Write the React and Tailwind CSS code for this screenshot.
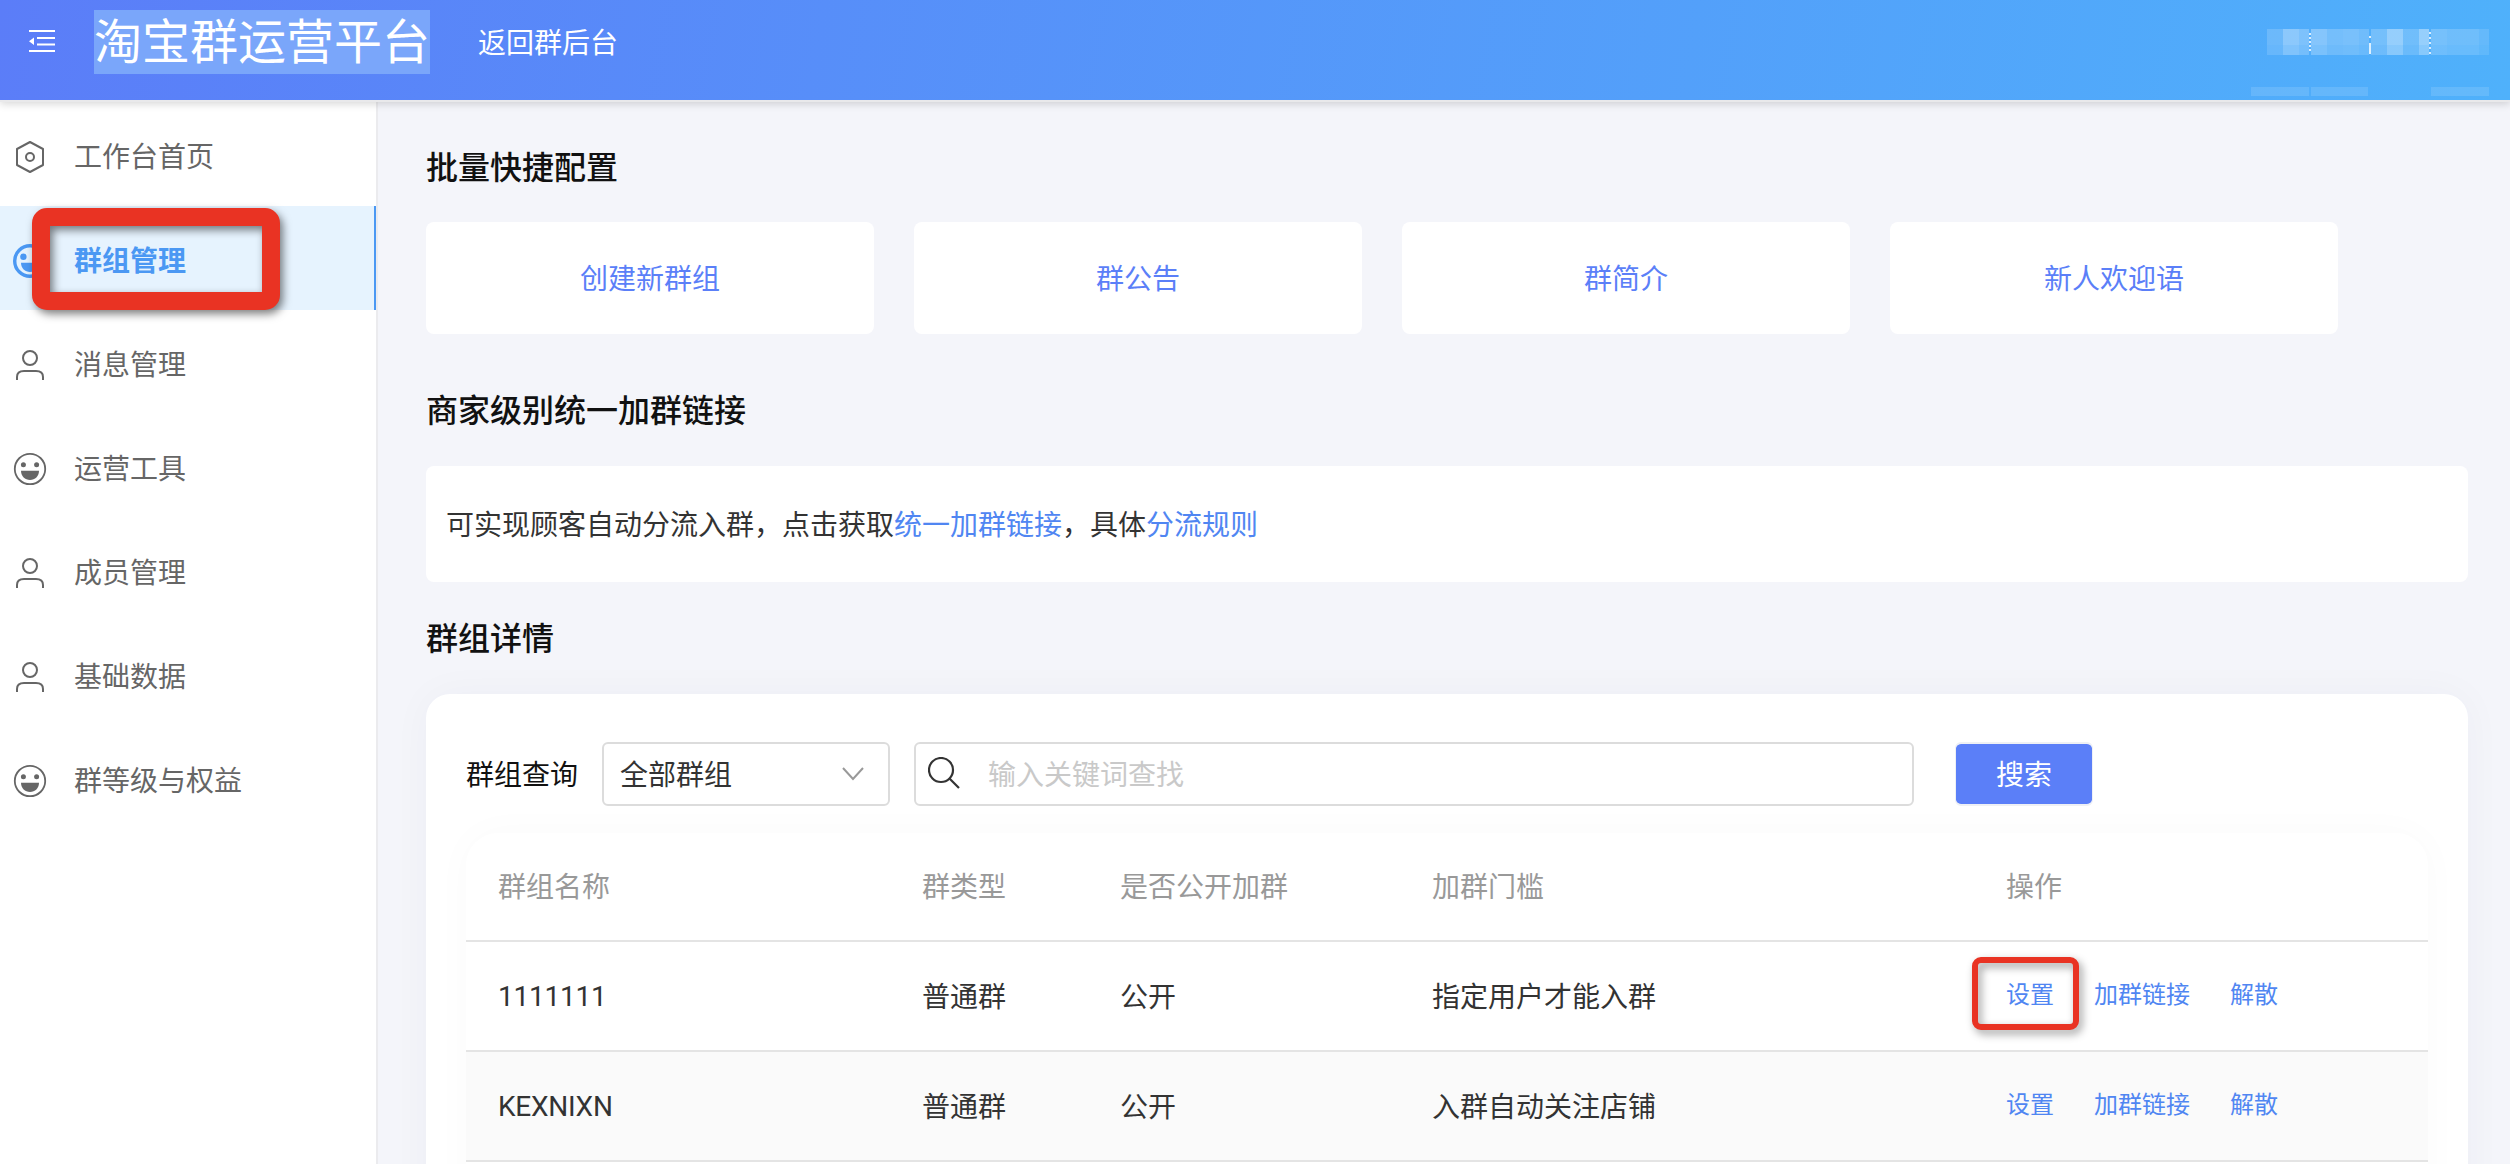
const HexagonIcon = () => (
    <svg width="32" height="34" viewBox="0 0 32 34" fill="none" stroke="currentColor" strokeWidth="2">
        <path d="M16 2 L29 9 V25 L16 32 L3 25 V9 Z" strokeLinejoin="round" />
        <circle cx="16" cy="17" r="4" />
    </svg>
);

const UserIcon = () => (
    <svg width="32" height="32" viewBox="0 0 32 32" fill="none" stroke="currentColor" strokeWidth="2">
        <circle cx="16" cy="9" r="7" />
        <path d="M3 31 V28 C3 24 6 22 10 22 H22 C26 22 29 24 29 28 V31" />
    </svg>
);

const SmileIcon = ({ bold }) => (
    <svg width="34" height="34" viewBox="0 0 34 34" fill="currentColor" className="-ml-px">
        <circle cx="17" cy="17" r={bold ? 15.3 : 15.2} fill="none" stroke="currentColor" strokeWidth={bold ? 3.4 : 1.8} />
        <circle cx="10.4" cy="12.8" r={bold ? 3.2 : 2.5} />
        <circle cx="23.6" cy="12.8" r={bold ? 3.2 : 2.5} />
        <path d="M8 18.7 H26 C26 24 22 28 17 28 C12 28 8 24 8 18.7 Z" />
    </svg>
);

const menus = [
    { label: "工作台首页", icon: HexagonIcon },
    { label: "群组管理", icon: SmileIcon, active: true },
    { label: "消息管理", icon: UserIcon },
    { label: "运营工具", icon: SmileIcon },
    { label: "成员管理", icon: UserIcon },
    { label: "基础数据", icon: UserIcon },
    { label: "群等级与权益", icon: SmileIcon },
];

const quickActions = ["创建新群组", "群公告", "群简介", "新人欢迎语"];

const groups = [
    { name: "1111111", type: "普通群", open: "公开", limit: "指定用户才能入群", marked: true },
    { name: "KEXNIXN", type: "普通群", open: "公开", limit: "入群自动关注店铺" },
];

// width and opacity of every masked cell of the account name
const maskGroups = [
    [[16, 0.16], [16, 0.34], [10, 0.26]],
    [[16, 0.3], [16, 0.21], [16, 0.23], [10, 0.18]],
    [[16, 0.21], [16, 0.4], [16, 0.19], [10, 0.4]],
    [[16, 0.22], [16, 0.18], [16, 0.18], [10, 0.12]],
];

const MaskedAccount = () => (
    <div className="relative w-[238px] h-[100px] pt-[29px]">
        <div className="flex gap-[2px] pl-[16px]">
            {maskGroups.map((cells, i) => (
                <div key={i} className="flex">
                    {cells.map(([width, opacity], j) => (
                        <div key={j} style={{ width, opacity }}>
                            <div className="h-4 bg-white" />
                            <div className="h-[10px] bg-white/80" />
                        </div>
                    ))}
                </div>
            ))}
        </div>
        <div className="absolute left-[58px] top-[33px] h-[20px] w-[2px] bg-[repeating-linear-gradient(to_bottom,#d8ecff_0_2px,transparent_2px_4px)]" />
        <div className="absolute left-[118px] top-[36px] h-[2px] w-[2px] bg-white/80" />
        <div className="absolute left-[118px] top-[43px] h-[11px] w-[2px] bg-white/80" />
        <div className="absolute left-[178px] top-[32px] h-[25px] w-[2px] bg-[repeating-linear-gradient(to_bottom,#d8ecff_0_2px,transparent_2px_5px)]" />
        <div className="flex gap-[2px] mt-8">
            <div className="w-[58px] h-[9px] bg-white/12" />
            <div className="w-[58px] h-[9px] bg-white/12" />
            <div className="w-[60px] h-[9px]" />
            <div className="w-[58px] h-[9px] bg-white/12" />
        </div>
    </div>
);

const Header = () => (
    <header className="relative z-10 h-[102px] shrink-0 border-b-2 border-[#e9e9eb] shadow-[0_2px_8px_rgba(0,0,0,0.16)] bg-[linear-gradient(100deg,#5b7df8_0%,#4fb1fb_100%)] bg-origin-border flex items-start text-white">
        <svg width="26" height="24" viewBox="0 0 26 24" className="ml-[29px] mt-[29px]" fill="currentColor">
            <path d="M0 1 H26 V3 H0 Z M8 8 H26 V10 H8 Z M8 14.5 H26 V16.5 H8 Z M0 21 H26 V23 H0 Z M0 12.2 L5 8.5 V16 Z" />
        </svg>
        <h1 className="ml-[39px] mt-[10px] h-16 w-[336px] bg-[#7aa6fa] text-[48px] leading-[56px] whitespace-nowrap">淘宝群运营平台</h1>
        <a className="ml-12 mt-[21px] text-[28px] leading-10">返回群后台</a>
        <div className="ml-auto mr-[21px]">
            <MaskedAccount />
        </div>
    </header>
);

const Sidebar = () => (
    <aside className="w-[378px] shrink-0 bg-white border-r-2 border-[#ebebee] text-[28px] text-[#666]">
        {menus.map(({ label, icon: Icon, active }) => (
            <div
                key={label}
                className={
                    active
                        ? "relative h-[104px] flex items-center pt-1 pl-[14px] bg-[#e6f3fe] border-r-2 border-[#4b98f3] text-[#4b98f3] font-bold"
                        : "h-[104px] flex items-center pt-1 pl-[14px]"
                }
            >
                <div className="w-[60px] pt-[2px]">
                    <Icon bold={active} />
                </div>
                <span className="leading-10 pb-[3px]">{label}</span>
                {active && (
                    <div className="absolute left-8 top-[2px] w-[248px] h-[102px] rounded-[15px] border-[18px] border-[#e93323] drop-shadow-[3px_4px_4px_rgba(0,0,0,0.5)]" />
                )}
            </div>
        ))}
    </aside>
);

const SearchBar = () => (
    <div className="flex items-center h-16 text-[28px]">
        <span className="w-[136px] pb-[2px] text-[#111]">群组查询</span>
        <div className="w-[288px] h-16 border-2 border-[#dcdcdc] rounded-md flex items-center justify-between pl-4 pr-6 text-[#333]">
            <span className="pb-[2px]">全部群组</span>
            <svg width="22" height="14" viewBox="0 0 22 14" fill="none" stroke="#999" strokeWidth="2">
                <path d="M1 1 L11 12 L21 1" />
            </svg>
        </div>
        <div className="ml-6 w-[1000px] h-16 border-2 border-[#dcdcdc] rounded-md flex items-center pl-3">
            <svg width="32" height="32" viewBox="0 0 32 32" fill="none" stroke="#333" strokeWidth="2.2" className="mb-[2px]">
                <circle cx="13" cy="13" r="12" />
                <path d="M21.5 21.5 L31 31" />
            </svg>
            <span className="ml-7 pb-[2px] text-[#c9c9c9]">输入关键词查找</span>
        </div>
        <button className="ml-[41px] w-[138px] h-16 pb-[2px] rounded-md border-x border-y-2 border-[#eef0f5] bg-[#5b7ff8] bg-clip-padding text-white">搜索</button>
    </div>
);

const GroupTable = () => (
    <div className="mt-[27px] rounded-t-[32px] bg-white shadow-[0_0_40px_rgba(0,0,0,0.025)] text-[28px] text-[#333]">
        <div className="grid grid-cols-[424px_198px_312px_574px_1fr] items-center h-[109px] pl-8 pb-1 border-b-2 border-[#e4e4e4] text-[#999]">
            <span>群组名称</span>
            <span>群类型</span>
            <span>是否公开加群</span>
            <span>加群门槛</span>
            <span>操作</span>
        </div>
        {groups.map((group) => (
            <div
                key={group.name}
                className="grid grid-cols-[424px_198px_312px_574px_1fr] items-center h-[110px] pl-8 pb-[2px] border-b-2 border-[#e4e4e4] even:bg-white odd:bg-[#fafafa]"
            >
                <span className="font-[Roboto] pt-[3px] tracking-[-0.25px]">{group.name}</span>
                <span>{group.type}</span>
                <span>{group.open}</span>
                <span>{group.limit}</span>
                <div className="relative flex gap-10 pb-[5px] text-2xl text-[#5086f2]">
                    <a>设置</a>
                    <a>加群链接</a>
                    <a>解散</a>
                    {group.marked && (
                        <div className="absolute -left-[34px] -top-[20px] w-[107px] h-[73px] rounded-[9px] border-[6px] border-[#e93323] drop-shadow-[3px_4px_4px_rgba(0,0,0,0.4)]" />
                    )}
                </div>
            </div>
        ))}
        <div className="h-[110px]" />
    </div>
);

const App = () => {
    return (
        <div className="h-[1164px] overflow-hidden flex flex-col bg-[#f4f5fa] font-['Noto_Sans_CJK_SC',sans-serif]">
            <Header />
            <div className="flex flex-1 min-h-0">
                <Sidebar />
                <main className="flex-1 pl-12 pr-[42px] pt-[39px]">
                    <h2 className="text-[32px] leading-[48px] font-medium text-[#111]">批量快捷配置</h2>
                    <div className="mt-[33px] flex gap-10">
                        {quickActions.map((action) => (
                            <a key={action} className="w-[448px] h-28 pb-[2px] rounded-lg bg-white flex items-center justify-center text-[28px] text-[#5b7ff8]">
                                {action}
                            </a>
                        ))}
                    </div>

                    <h2 className="mt-[50px] text-[32px] leading-[48px] font-medium text-[#111]">商家级别统一加群链接</h2>
                    <div className="mt-[34px] h-[116px] pb-[2px] rounded-lg bg-white flex items-center pl-5 text-[28px] text-[#333]">
                        可实现顾客自动分流入群，点击获取
                        <a className="text-[#5086f2]">统一加群链接</a>
                        ，具体
                        <a className="text-[#5086f2]">分流规则</a>
                    </div>

                    <h2 className="mt-[30px] text-[32px] leading-[48px] font-medium text-[#111]">群组详情</h2>
                    <div className="mt-[34px] rounded-[24px] bg-white pt-12 px-10 shadow-[0_0_40px_rgba(30,40,90,0.035)]">
                        <SearchBar />
                        <GroupTable />
                    </div>
                </main>
            </div>
        </div>
    );
};

export default App;
